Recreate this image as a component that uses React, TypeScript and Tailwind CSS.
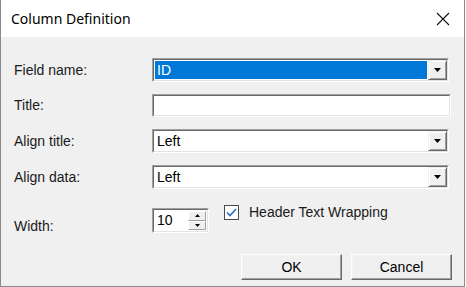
import React from "react";

const ui = { fontFamily: '"Liberation Sans", Arial, sans-serif' };

function Sunken({ className = "", children }: { className?: string; children?: React.ReactNode }) {
  return (
    <div className={`border border-t-[#a0a0a0] border-l-[#a0a0a0] border-b-white border-r-white ${className}`}>
      <div className="flex h-full w-full border border-t-[#696969] border-l-[#696969] border-b-[#e3e3e3] border-r-[#e3e3e3] bg-white">
        {children}
      </div>
    </div>
  );
}

function Arrow({ up = false, size = 4 }: { up?: boolean; size?: number }) {
  const w = size * 2 + 1;
  return (
    <svg width={w} height={size + 1} viewBox={`0 0 ${w} ${size + 1}`}>
      <polygon
        points={up ? `0,${size + 1} ${w},${size + 1} ${w / 2},0` : `0,0 ${w},0 ${w / 2},${size + 1}`}
        fill="#000"
      />
    </svg>
  );
}

function DropButton() {
  return (
    <div className="flex w-[19px] items-center justify-center border border-t-[#f0f0f0] border-l-[#f0f0f0] border-b-[#696969] border-r-[#696969] bg-[#f0f0f0] shadow-[inset_1px_1px_0_#fff,inset_-1px_-1px_0_#a0a0a0]">
      <Arrow size={3} />
    </div>
  );
}

function Combo({ value, selected = false }: { value: string; selected?: boolean }) {
  return (
    <Sunken className="h-[24px] w-[297px]">
      <div className="flex flex-1 items-center p-px">
        <div
          className={`flex h-full flex-1 items-center pl-[2px] ${
            selected ? "bg-[#0078d7] text-white" : "text-black"
          }`}
        >
          {value}
        </div>
      </div>
      <DropButton />
    </Sunken>
  );
}

function Row({ label, children }: { label: string; children: React.ReactNode }) {
  return (
    <div className="flex items-center">
      <div className="w-[138px] text-[#1a1a1a]">{label}</div>
      {children}
    </div>
  );
}

function Button({ label }: { label: string }) {
  return (
    <div className="flex h-[26px] w-[101px] items-center justify-center border border-t-white border-l-white border-b-[#696969] border-r-[#696969] bg-[#f0f0f0] shadow-[inset_-1px_-1px_0_#a0a0a0,inset_1px_1px_0_#f4f4f4] text-black">
      {label}
    </div>
  );
}

export default function App() {
  return (
    <div className="h-[287px] w-[466px] overflow-hidden bg-white" style={ui}>
      <div className="flex h-full w-[465px] flex-col border-l border-r border-b border-[#8a8a8a]">
        <div className="flex h-[37px] items-center justify-between bg-white pl-[10px] pr-[14px]">
          <span className="text-[14px] text-black" style={{ fontFamily: '"Noto Sans", "Open Sans", sans-serif' }}>
            Column Definition
          </span>
          <svg width="14" height="14" viewBox="0 0 14 14">
            <path d="M1 1 L13 13 M13 1 L1 13" stroke="#111" strokeWidth="1.1" />
          </svg>
        </div>
        <div className="flex flex-1 flex-col bg-[#f0f0f0] pl-[13px] pt-[21px] text-[14px]">
          <div className="flex flex-col gap-[12px]">
            <Row label="Field name:">
              <Combo value="ID" selected />
            </Row>
            <Row label="Title:">
              <Sunken className="h-[23px] w-[299px]" />
            </Row>
            <Row label="Align title:">
              <Combo value="Left" />
            </Row>
            <Row label="Align data:">
              <Combo value="Left" />
            </Row>
          </div>
          <div className="mt-[12px] flex items-start">
            <div className="w-[138px] pt-[15px] text-[#1a1a1a]">Width:</div>
            <Sunken className="mt-[7px] h-[25px] w-[57px]">
              <div className="flex flex-1 items-center pl-[3px]">10</div>
              <div className="my-px mr-px flex w-[18px] flex-col">
                <div className="flex flex-1 items-center justify-center border border-t-white border-l-white border-b-[#a0a0a0] border-r-[#a0a0a0] bg-[#f0f0f0]">
                  <Arrow up size={2} />
                </div>
                <div className="flex flex-1 items-center justify-center border border-t-white border-l-white border-b-[#a0a0a0] border-r-[#a0a0a0] bg-[#f0f0f0]">
                  <Arrow size={2} />
                </div>
              </div>
            </Sunken>
            <div className="ml-[15px] mt-[1px] flex items-center gap-[10px]">
              <div className="flex h-[15px] w-[15px] items-center justify-center border border-[#4a4a4a] bg-white">
                <svg width="11" height="9" viewBox="0 0 11 9">
                  <path d="M1 4.5 L4 7.5 L10 1" fill="none" stroke="#2a6bc4" strokeWidth="1.6" />
                </svg>
              </div>
              <span className="text-[#1a1a1a]">Header Text Wrapping</span>
            </div>
          </div>
          <div className="mt-[17px] flex justify-end gap-[9px] pr-[12px]">
            <Button label="OK" />
            <Button label="Cancel" />
          </div>
        </div>
      </div>
    </div>
  );
}
